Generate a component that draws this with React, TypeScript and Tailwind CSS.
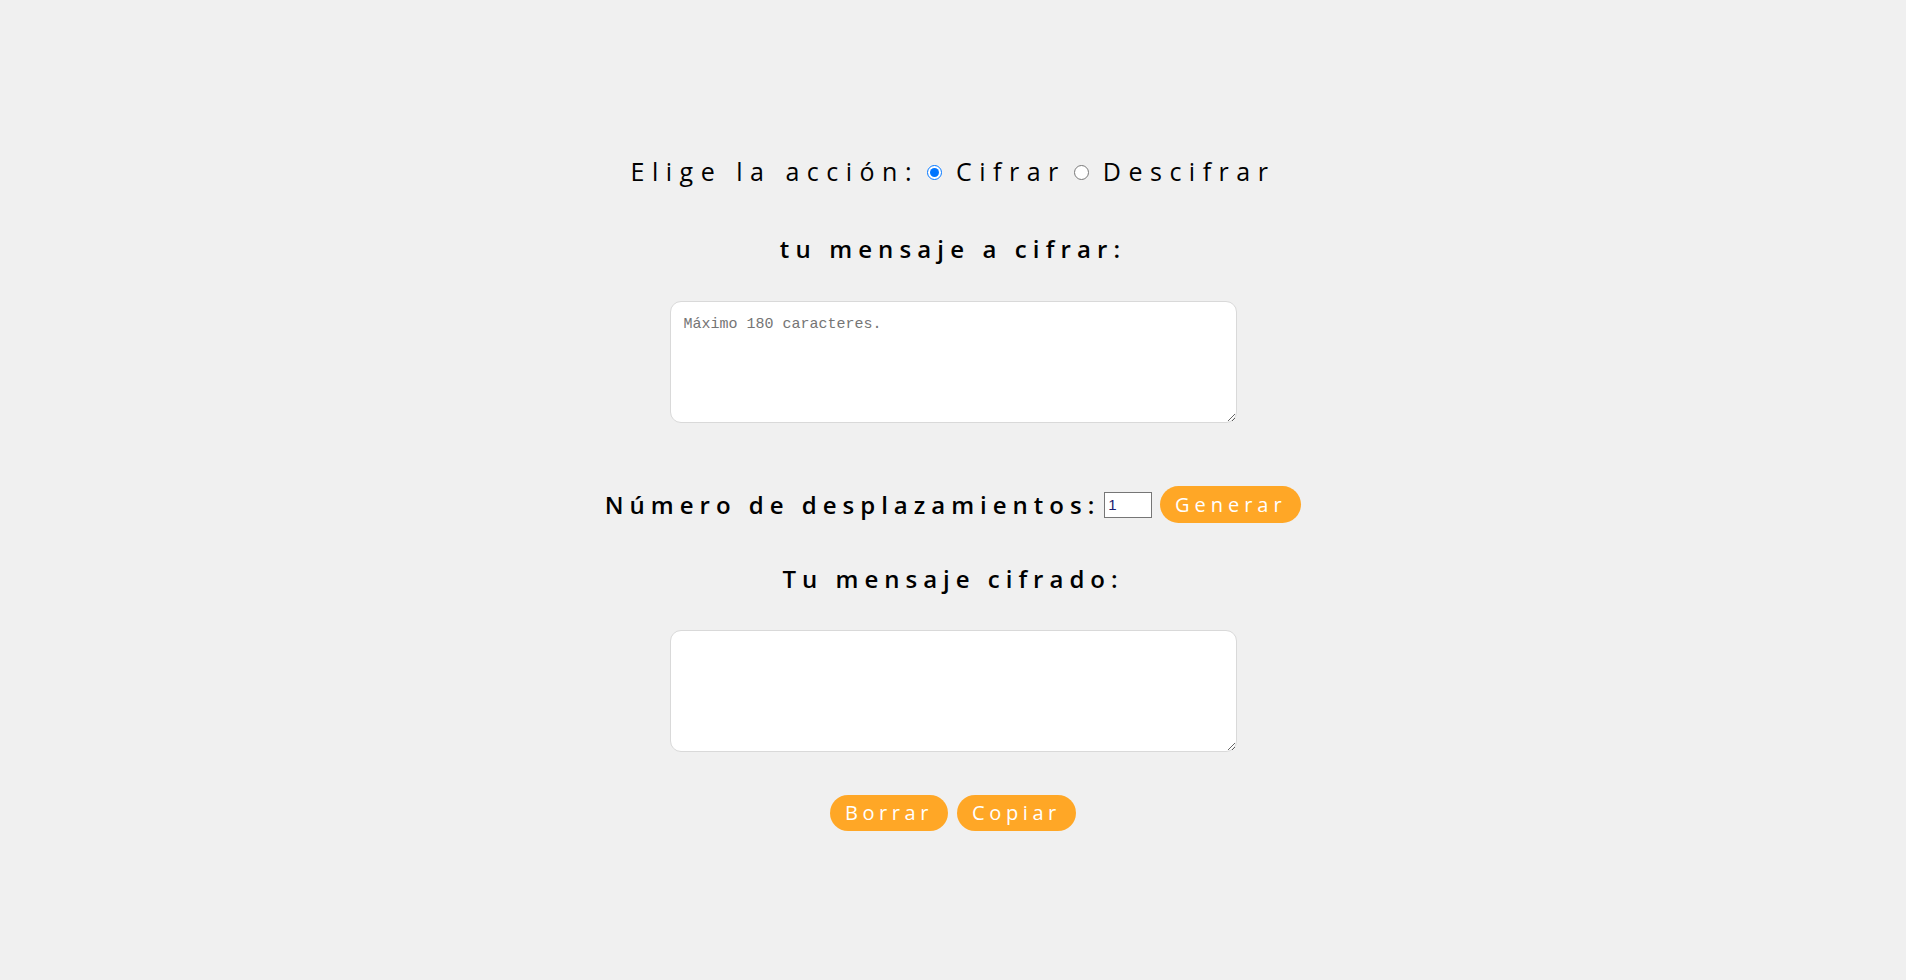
import React from "react";

export default function App() {
  const font = { fontFamily: "'Open Sans', 'Noto Sans', sans-serif" };
  return (
    <div className="min-h-[980px] w-full bg-[#f0f0f0] text-black" style={font}>
      <div className="flex flex-col items-center pt-[157px]">
        <div className="flex h-[30px] items-center text-[25px] tracking-[0.3em]">
          <span>Elige la acción:</span>
          <input type="radio" name="accion" defaultChecked className="ml-[8px] mr-[14px] h-[15px] w-[15px]" />
          <span>Cifrar</span>
          <input type="radio" name="accion" className="ml-[8px] mr-[14px] h-[15px] w-[15px]" />
          <span>Descifrar</span>
        </div>

        <h2 className="mt-[47px] h-[30px] text-[24px] leading-[30px] font-semibold tracking-[0.255em]">tu mensaje a cifrar:</h2>

        <textarea
          placeholder="Máximo 180 caracteres."
          className="mt-[37px] h-[122px] w-[567px] rounded-[11px] border border-[#d9d9d9] bg-white px-[13px] py-[12px] text-[15px] placeholder-[#757575] outline-none"
          style={{ fontFamily: "'Liberation Mono', 'DejaVu Sans Mono', monospace" }}
        />

        <div className="mt-[63px] flex h-[37px] items-center">
          <span className="text-[24px] font-semibold tracking-[0.25em]">Número de desplazamientos:</span>
          <input
            type="number"
            defaultValue={1}
            className="ml-[4px] h-[26px] w-[48px] border border-[#767676] bg-white px-[3px] text-[15px] text-[#1a1a6e]"
            style={{ fontFamily: "'Liberation Sans', Arial, sans-serif" }}
          />
          <button className="ml-[8px] h-[37px] w-[141px] rounded-full bg-[#ffa726] text-[20px] tracking-[0.25em] text-white">
            Generar
          </button>
        </div>

        <h2 className="mt-[41px] h-[30px] text-[24px] leading-[30px] font-semibold tracking-[0.25em]">Tu mensaje cifrado:</h2>

        <textarea
          className="mt-[36px] h-[122px] w-[567px] rounded-[11px] border border-[#d9d9d9] bg-white px-[13px] py-[12px] text-[15px] outline-none"
          style={{ fontFamily: "'Liberation Mono', 'DejaVu Sans Mono', monospace" }}
        />

        <div className="mt-[43px] flex gap-[9px]">
          <button className="h-[36px] w-[118px] rounded-full bg-[#ffa726] text-[20px] tracking-[0.23em] text-white">
            Borrar
          </button>
          <button className="h-[36px] w-[119px] rounded-full bg-[#ffa726] text-[20px] tracking-[0.23em] text-white">
            Copiar
          </button>
        </div>
      </div>
    </div>
  );
}
